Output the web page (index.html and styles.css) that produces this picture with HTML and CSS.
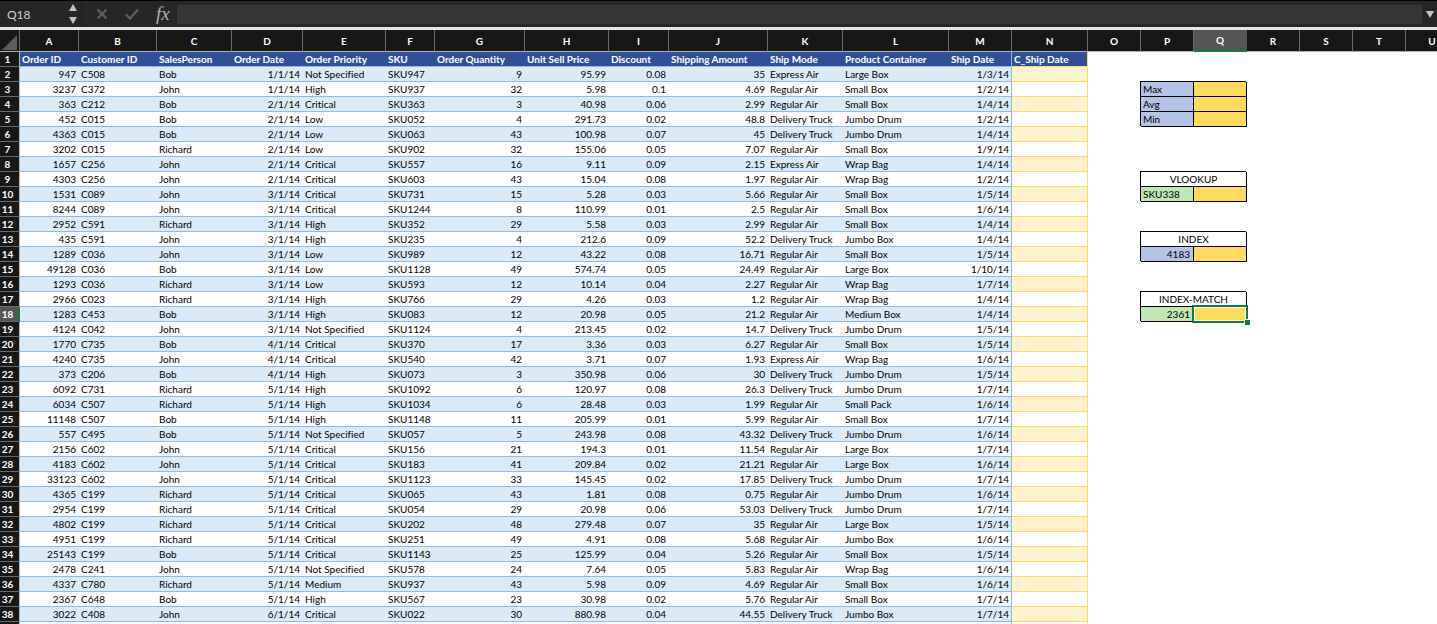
FILE: index.html
```
<!DOCTYPE html>
<html lang="en">
<head>
  <meta charset="UTF-8">
  <meta name="viewport" content="width=device-width, initial-scale=1.0">
  <title>Orders</title>
  <link rel="stylesheet" href="styles.css">
</head>
<body>
  <div class="formula-bar">
    <div class="name-box">
      <input type="text" class="cell-name" value="Q18" aria-label="Name box">
      <button class="stepper" aria-label="Change cell">
        <svg width="8" height="20" viewBox="0 0 8 20"><path d="M4 0L8 7H0zM0 13H8L4 20z" fill="#c4c4c4"/></svg>
      </button>
    </div>
    <div class="actions">
      <button aria-label="Cancel">
        <svg width="12" height="12" viewBox="0 0 12 12"><path d="M1.5 1.5L10.5 10.5M10.5 1.5L1.5 10.5" stroke="#5e5e5e" stroke-width="2.4" fill="none"/></svg>
      </button>
      <button aria-label="Enter">
        <svg width="14" height="12" viewBox="0 0 14 12"><path d="M1 6.5L5 10.5L13 1.5" stroke="#5e5e5e" stroke-width="2.4" fill="none"/></svg>
      </button>
      <button class="fx" aria-label="Insert function">fx</button>
    </div>
    <input type="text" class="formula" aria-label="Formula">
    <button class="expand" aria-label="Expand formula bar">
      <svg width="8" height="7" viewBox="0 0 8 7"><path d="M0 0H8L4 7z" fill="#c4c4c4"/></svg>
    </button>
  </div>

  <div class="sheet">
    <table>
      <colgroup id="cols"></colgroup>
      <thead id="letters"></thead>
      <tbody id="rows"></tbody>
    </table>
  </div>

  <script src="script.js"></script>
</body>
</html>
```
FILE: styles.css
```
body {
  margin: 0;
  background: #fff;
  color: #000;
  font-family: Lato, "Liberation Sans", sans-serif;
  font-size: 10px;
  font-variant-ligatures: none;
  height: 100vh;
  overflow: hidden;
  display: flex;
  flex-direction: column;
}
button, input {
  font-family: inherit;
  background: none;
  border: none;
  margin: 0;
  padding: 0;
}
button {
  display: flex;
  align-items: center;
  justify-content: center;
}

/* formula bar */
.formula-bar {
  display: flex;
  align-items: stretch;
  flex: none;
  height: 26px;
  background: #262626;
  border-top: 1px solid #000;
  border-bottom: 3px solid #e4e4e4;
}
.name-box {
  display: flex;
  align-items: center;
  width: 81px;
  border-right: 1px solid #1c1c1c;
}
.cell-name {
  flex: 1;
  min-width: 0;
  padding-left: 7px;
  color: #d0d0d0;
  font-size: 12px;
}
.stepper {
  width: 16px;
}
.actions {
  display: flex;
  align-items: center;
  gap: 17px;
  padding: 0 7px 0 14px;
}
.fx {
  color: #b0b0b0;
  font-family: "Liberation Serif", serif;
  font-size: 19px;
  font-style: italic;
  line-height: 20px;
}
.formula {
  flex: 1;
  min-width: 0;
  margin: 4px 0 3px;
  border-radius: 2px;
  background: #373737;
  color: #fff;
}
.expand {
  width: 15px;
}

/* grid */
.sheet {
  flex: 1;
  min-height: 0;
  overflow: hidden;
}
table {
  table-layout: fixed;
  width: 0;
  border-collapse: separate;
  border-spacing: 0;
}
th, td {
  box-sizing: border-box;
  height: 15px;
  padding: 0 2px;
  line-height: 14px;
  white-space: nowrap;
  text-align: left;
  border: 0 solid transparent;
  border-right-width: 1px;
  border-bottom-width: 1px;
}
thead th {
  height: 22px;
  text-align: center;
  color: #fff;
  background: #171717;
  border-right-color: #6a6a6a;
  border-bottom-color: #b5b5b5;
}
thead .active {
  background: #555;
  border-right-color: #555;
  border-bottom: 2px solid #107c41;
}
.corner svg {
  display: block;
  margin-top: 3px;
}
.row-number {
  padding: 0 4px 0 0;
  text-align: center;
  color: #fff;
  background: #171717;
  border-right-color: #b5b5b5;
  border-bottom-color: #6a6a6a;
}
.row-number.active {
  padding-right: 3px;
  background: #555;
  border-right: 2px solid #107c41;
}
.number {
  padding-right: 3px;
  text-align: right;
}

/* orders table */
.title {
  color: #fff;
  font-weight: bold;
  background: #2f4f98;
  border-right-width: 0;
  border-bottom-color: #8ebae3;
}
.order {
  border-right-width: 0;
  border-bottom-color: #8ebae3;
}
.band .order {
  background: #daeaf7;
}
.order.last, .title.last {
  padding-right: 2px;
  border-right: 1px solid #8ebae3;
}
.ship {
  border-color: #fedb62;
}
.title.ship {
  border-right-width: 1px;
}
.band .ship {
  background: #fff2cd;
}

/* lookup boxes */
.box {
  border-color: #000;
  box-shadow: -1px -1px 0 #000;
}
.center {
  text-align: center;
}
.blue {
  background: #b4c4e8;
}
.green {
  background: #c0e6b3;
}
.yellow {
  background: #ffdb5c;
}
.selected {
  position: relative;
}
.selected::before {
  content: "";
  position: absolute;
  inset: -2px;
  border: 2px solid #107c41;
  box-shadow: inset 0 0 0 1px #fff;
}
.selected::after {
  content: "";
  position: absolute;
  right: -4px;
  bottom: -4px;
  width: 5px;
  height: 5px;
  background: #107c41;
  border: 1px solid #fff;
  border-right: none;
  border-bottom: none;
}
```
FILE: script.js
```
const widths = [20, 59, 78, 75, 71, 83, 49, 90, 84, 60, 99, 75, 106, 63, 76, 53, 53, 53, 53, 53, 53, 53];
const letters = "ABCDEFGHIJKLMNOPQRSTU".split("");
const titles = ["Order ID", "Customer ID", "SalesPerson", "Order Date", "Order Priority", "SKU", "Order Quantity",
  "Unit Sell Price", "Discount", "Shipping Amount", "Ship Mode", "Product Container", "Ship Date", "C_Ship Date"];
const numeric = [0, 3, 6, 7, 8, 9, 12];

const orders = `947|C508|Bob|1/1/14|Not Specified|SKU947|9|95.99|0.08|35|Express Air|Large Box|1/3/14
3237|C372|John|1/1/14|High|SKU937|32|5.98|0.1|4.69|Regular Air|Small Box|1/2/14
363|C212|Bob|2/1/14|Critical|SKU363|3|40.98|0.06|2.99|Regular Air|Small Box|1/4/14
452|C015|Bob|2/1/14|Low|SKU052|4|291.73|0.02|48.8|Delivery Truck|Jumbo Drum|1/2/14
4363|C015|Bob|2/1/14|Low|SKU063|43|100.98|0.07|45|Delivery Truck|Jumbo Drum|1/4/14
3202|C015|Richard|2/1/14|Low|SKU902|32|155.06|0.05|7.07|Regular Air|Small Box|1/9/14
1657|C256|John|2/1/14|Critical|SKU557|16|9.11|0.09|2.15|Express Air|Wrap Bag|1/4/14
4303|C256|John|2/1/14|Critical|SKU603|43|15.04|0.08|1.97|Regular Air|Wrap Bag|1/2/14
1531|C089|John|3/1/14|Critical|SKU731|15|5.28|0.03|5.66|Regular Air|Small Box|1/5/14
8244|C089|John|3/1/14|Critical|SKU1244|8|110.99|0.01|2.5|Regular Air|Small Box|1/6/14
2952|C591|Richard|3/1/14|High|SKU352|29|5.58|0.03|2.99|Regular Air|Small Box|1/4/14
435|C591|John|3/1/14|High|SKU235|4|212.6|0.09|52.2|Delivery Truck|Jumbo Box|1/4/14
1289|C036|John|3/1/14|Low|SKU989|12|43.22|0.08|16.71|Regular Air|Small Box|1/5/14
49128|C036|Bob|3/1/14|Low|SKU1128|49|574.74|0.05|24.49|Regular Air|Large Box|1/10/14
1293|C036|Richard|3/1/14|Low|SKU593|12|10.14|0.04|2.27|Regular Air|Wrap Bag|1/7/14
2966|C023|Richard|3/1/14|High|SKU766|29|4.26|0.03|1.2|Regular Air|Wrap Bag|1/4/14
1283|C453|Bob|3/1/14|High|SKU083|12|20.98|0.05|21.2|Regular Air|Medium Box|1/4/14
4124|C042|John|3/1/14|Not Specified|SKU1124|4|213.45|0.02|14.7|Delivery Truck|Jumbo Drum|1/5/14
1770|C735|Bob|4/1/14|Critical|SKU370|17|3.36|0.03|6.27|Regular Air|Small Box|1/5/14
4240|C735|John|4/1/14|Critical|SKU540|42|3.71|0.07|1.93|Express Air|Wrap Bag|1/6/14
373|C206|Bob|4/1/14|High|SKU073|3|350.98|0.06|30|Delivery Truck|Jumbo Drum|1/5/14
6092|C731|Richard|5/1/14|High|SKU1092|6|120.97|0.08|26.3|Delivery Truck|Jumbo Drum|1/7/14
6034|C507|Richard|5/1/14|High|SKU1034|6|28.48|0.03|1.99|Regular Air|Small Pack|1/6/14
11148|C507|Bob|5/1/14|High|SKU1148|11|205.99|0.01|5.99|Regular Air|Small Box|1/7/14
557|C495|Bob|5/1/14|Not Specified|SKU057|5|243.98|0.08|43.32|Delivery Truck|Jumbo Drum|1/6/14
2156|C602|John|5/1/14|Critical|SKU156|21|194.3|0.01|11.54|Regular Air|Large Box|1/7/14
4183|C602|John|5/1/14|Critical|SKU183|41|209.84|0.02|21.21|Regular Air|Large Box|1/6/14
33123|C602|John|5/1/14|Critical|SKU1123|33|145.45|0.02|17.85|Delivery Truck|Jumbo Drum|1/7/14
4365|C199|Richard|5/1/14|Critical|SKU065|43|1.81|0.08|0.75|Regular Air|Jumbo Drum|1/6/14
2954|C199|Richard|5/1/14|Critical|SKU054|29|20.98|0.06|53.03|Delivery Truck|Jumbo Drum|1/7/14
4802|C199|Richard|5/1/14|Critical|SKU202|48|279.48|0.07|35|Regular Air|Large Box|1/5/14
4951|C199|Richard|5/1/14|Critical|SKU251|49|4.91|0.08|5.68|Regular Air|Jumbo Box|1/6/14
25143|C199|Bob|5/1/14|Critical|SKU1143|25|125.99|0.04|5.26|Regular Air|Small Box|1/5/14
2478|C241|John|5/1/14|Not Specified|SKU578|24|7.64|0.05|5.83|Regular Air|Wrap Bag|1/6/14
4337|C780|Richard|5/1/14|Medium|SKU937|43|5.98|0.09|4.69|Regular Air|Small Box|1/6/14
2367|C648|Bob|5/1/14|High|SKU567|23|30.98|0.02|5.76|Regular Air|Small Box|1/7/14
3022|C408|John|6/1/14|Critical|SKU022|30|880.98|0.04|44.55|Delivery Truck|Jumbo Box|1/7/14`.split("\n").map(line => line.split("|"));

// cells in columns P and Q, by row number
const boxes = {
  3: '<td class="box blue">Max</td><td class="box yellow"></td>',
  4: '<td class="box blue">Avg</td><td class="box yellow"></td>',
  5: '<td class="box blue">Min</td><td class="box yellow"></td>',
  9: '<td class="box center" colspan="2">VLOOKUP</td>',
  10: '<td class="box green">SKU338</td><td class="box yellow"></td>',
  13: '<td class="box center" colspan="2">INDEX</td>',
  14: '<td class="box blue number">4183</td><td class="box yellow"></td>',
  17: '<td class="box center" colspan="2">INDEX-MATCH</td>',
  18: '<td class="box green number">2361</td><td class="box yellow selected"></td>'
};

document.getElementById("cols").innerHTML = widths.map(w => `<col style="width:${w}px">`).join("");

document.getElementById("letters").innerHTML = `<tr>
  <th class="corner"><svg width="15" height="15" viewBox="0 0 15 15"><path d="M15 0V15H0z" fill="#5e5e5e"/></svg></th>
  ${letters.map(l => `<th scope="col" class="${l === "Q" ? "active" : ""}">${l}</th>`).join("")}
</tr>`;

function orderCells(row) {
  if (row === 1) {
    return titles.map((t, i) => `<th class="title ${i === 12 ? "last" : ""} ${i === 13 ? "ship" : ""}">${t}</th>`).join("");
  }
  const order = orders[row - 2] || Array(13).fill("");
  return order.map((value, i) =>
    `<td class="order ${numeric.includes(i) ? "number" : ""} ${i === 12 ? "last" : ""}">${value}</td>`
  ).join("") + '<td class="ship"></td>';
}

// one empty row follows the orders
let html = "";
for (let row = 1; row <= orders.length + 2; row++) {
  html += `<tr class="${row % 2 === 0 ? "band" : ""}">
    <th scope="row" class="row-number ${row === 18 ? "active" : ""}">${row <= orders.length + 1 ? row : ""}</th>
    ${orderCells(row)}<td></td>${boxes[row] || "<td></td><td></td>"}<td></td><td></td><td></td><td></td>
  </tr>`;
}
document.getElementById("rows").innerHTML = html;
```
